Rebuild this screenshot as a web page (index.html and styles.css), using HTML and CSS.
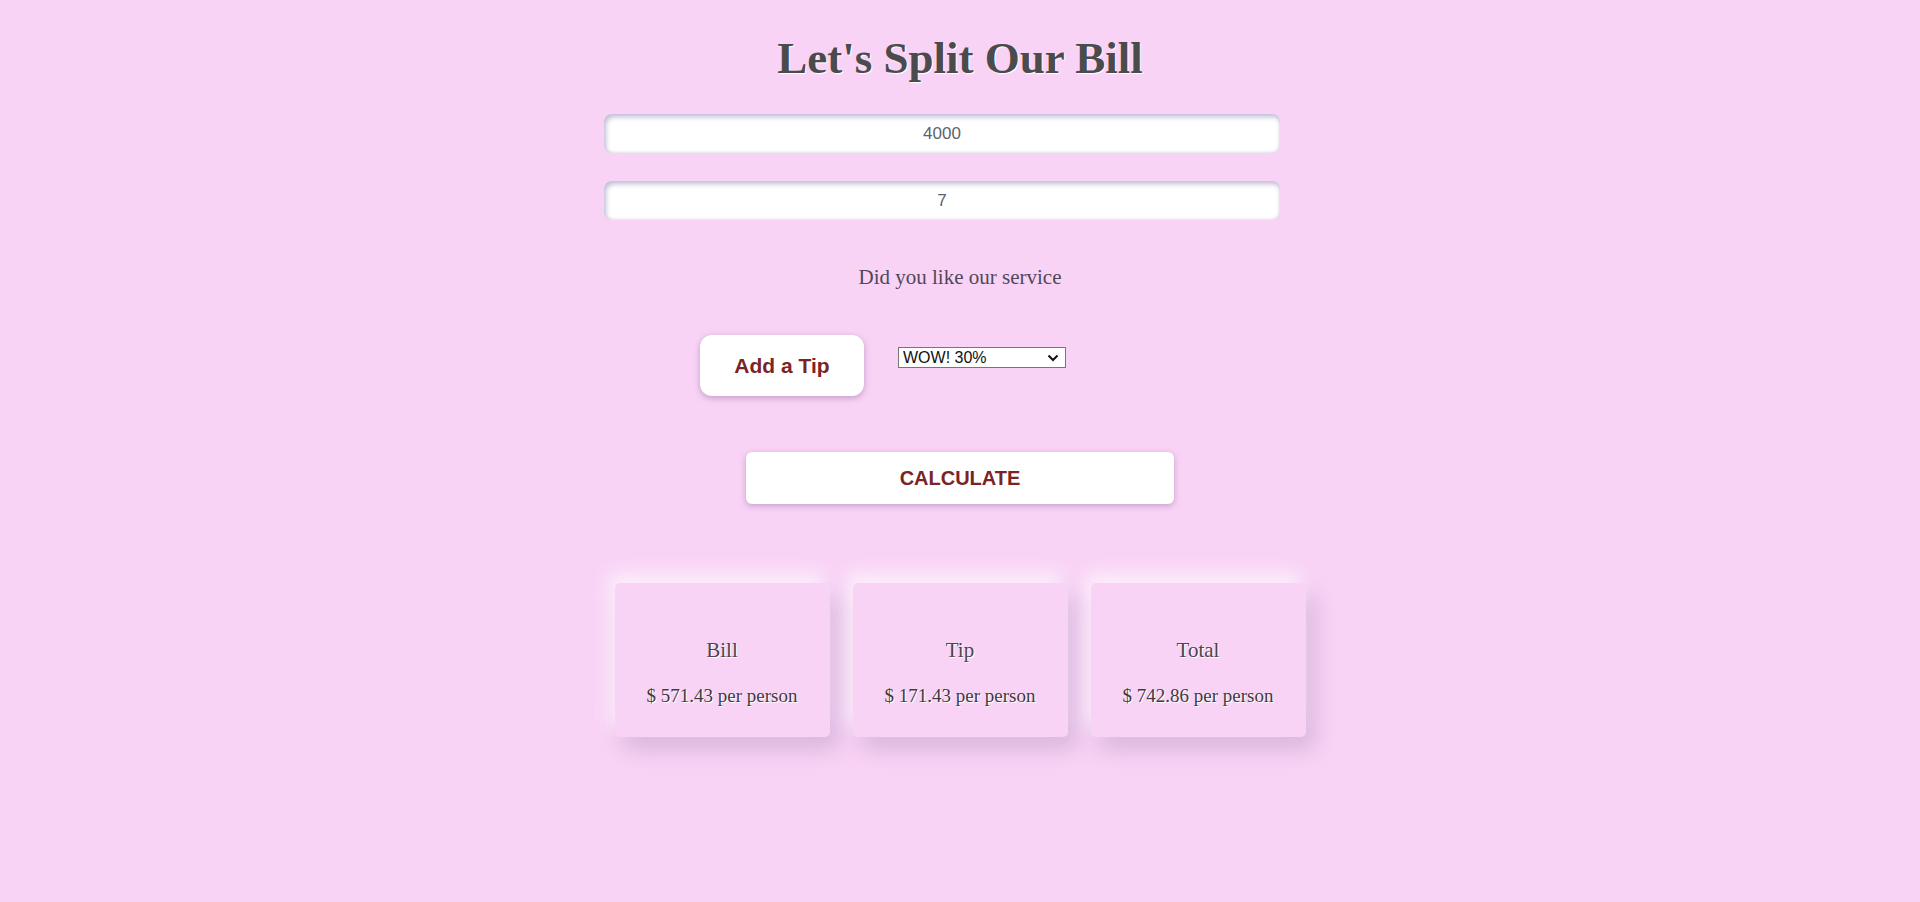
FILE: index.html
```html
<!DOCTYPE html>
<html lang="en">
<head>
<meta charset="utf-8">
<title>Let's Split Our Bill</title>
<link rel="stylesheet" href="styles.css">
</head>
<body>
<main class="app">
  <h1 class="title">Let's Split Our Bill</h1>
  <div class="form">
    <input class="field" type="text" value="4000">
    <input class="field field-second" type="text" value="7">
  </div>
  <p class="question">Did you like our service</p>
  <div class="tip-row">
    <button class="tip-btn" type="button">Add a Tip</button>
    <span class="select-wrap">
      <select class="tip-select">
        <option>WOW! 30%</option>
        <option>Good 20%</option>
        <option>Okay 10%</option>
      </select>
      <svg class="chevron" width="12" height="8" viewBox="0 0 12 8"><path d="M1.5 1.5 L6 6 L10.5 1.5" fill="none" stroke="#111" stroke-width="2"/></svg>
    </span>
  </div>
  <button class="calc-btn" type="button">CALCULATE</button>
  <section class="cards">
    <div class="card">
      <div class="card-title">Bill</div>
      <div class="card-value">$ 571.43 per person</div>
    </div>
    <div class="card">
      <div class="card-title">Tip</div>
      <div class="card-value">$ 171.43 per person</div>
    </div>
    <div class="card">
      <div class="card-title">Total</div>
      <div class="card-value">$ 742.86 per person</div>
    </div>
  </section>
</main>
</body>
</html>
```

FILE: styles.css
```css
html, body {
  margin: 0;
  padding: 0;
}

body {
  background: #f9d3f6;
  font-family: "Liberation Serif", "Times New Roman", serif;
  color: #4b4650;
  min-height: 902px;
}

.app {
  display: flex;
  flex-direction: column;
  align-items: center;
  padding-top: 33px;
  padding-bottom: 120px;
}

.title {
  margin: 0;
  font-family: "Liberation Serif", "Times New Roman", serif;
  font-weight: 700;
  font-size: 45px;
  line-height: 50px;
  color: #4b4b4d;
  text-shadow: 1px 1px 1px #ffffff;
}

.form {
  align-self: flex-start;
  margin-left: calc(50% - 356px);
  width: 676px;
  margin-top: 31px;
  display: flex;
  flex-direction: column;
  gap: 28px;
}

.field {
  box-sizing: border-box;
  width: 676px;
  height: 39px;
  border: none;
  outline: none;
  border-radius: 8px;
  background: #ffffff;
  text-align: center;
  font-family: "Liberation Sans", Arial, sans-serif;
  font-size: 17px;
  color: #5c6272;
  box-shadow: inset 2px 3px 5px rgba(150, 145, 185, 0.6), inset -1px -1px 3px rgba(170, 165, 200, 0.3);
}

.question {
  margin: 45px 0 0;
  font-size: 21px;
  color: #4f4858;
}

.tip-row {
  align-self: flex-start;
  margin-left: calc(50% - 260px);
  margin-top: 45px;
  display: flex;
  align-items: flex-start;
  gap: 34px;
}

.tip-btn {
  width: 164px;
  height: 61px;
  border: none;
  border-radius: 12px;
  background: #ffffff;
  font-family: "Liberation Sans", Arial, sans-serif;
  font-weight: 700;
  font-size: 21px;
  color: #7b2426;
  box-shadow: 0 2px 6px rgba(150, 110, 160, 0.55);
  cursor: pointer;
}

.select-wrap {
  position: relative;
  display: inline-block;
  margin-top: 12px;
}

.tip-select {
  appearance: none;
  -webkit-appearance: none;
  box-sizing: border-box;
  width: 168px;
  height: 21px;
  padding: 0 0 0 4px;
  border: 1px solid #767676;
  border-radius: 0;
  background: #ffffff;
  font-family: "Liberation Sans", Arial, sans-serif;
  font-size: 16px;
  line-height: 19px;
  color: #111111;
  display: block;
}

.chevron {
  position: absolute;
  right: 7px;
  top: 7px;
  pointer-events: none;
}

.calc-btn {
  margin-top: 56px;
  width: 428px;
  height: 52px;
  border: none;
  border-radius: 6px;
  background: #ffffff;
  font-family: "Liberation Sans", Arial, sans-serif;
  font-weight: 700;
  font-size: 20px;
  color: #7b2426;
  box-shadow: 0 2px 6px rgba(150, 110, 160, 0.5);
  cursor: pointer;
}

.cards {
  margin-top: 79px;
  display: flex;
  gap: 23px;
}

.card {
  box-sizing: border-box;
  width: 215px;
  height: 154px;
  padding-top: 55px;
  border-radius: 5px;
  background: #f9d3f6;
  text-align: center;
  box-shadow: -6px -10px 18px rgba(255, 255, 255, 0.65), 8px 12px 22px rgba(165, 135, 185, 0.4);
}

.card-title {
  font-size: 21px;
  color: #4b4650;
  text-shadow: 1px 1px 0 #ffffff;
}

.card-value {
  margin-top: 22px;
  font-size: 19px;
  color: #3f3a44;
  text-shadow: 1px 1px 0 #ffffff;
}
```
